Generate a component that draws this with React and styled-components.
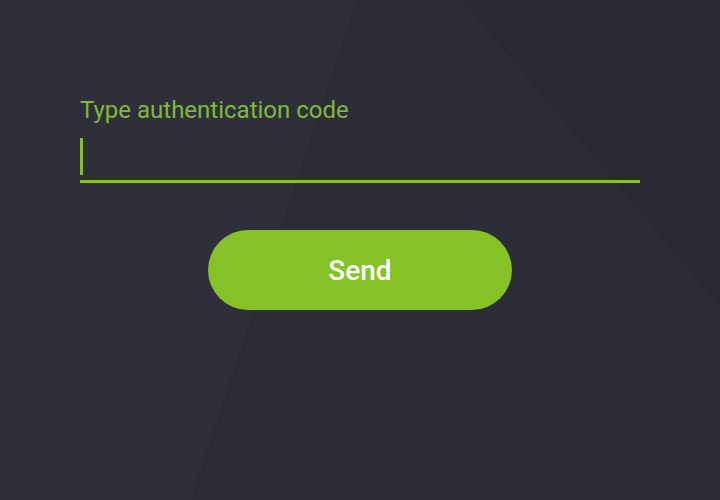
import React from "react";
import styled, { createGlobalStyle } from "styled-components";

const Global = createGlobalStyle`
  html, body { margin: 0; padding: 0; background: #2b2c37; }
  body { font-family: Roboto, "Noto Sans", "Liberation Sans", sans-serif; }
  * { box-sizing: border-box; }
`;

const Page = styled.div`
  position: relative;
  width: 720px;
  height: 500px;
  overflow: hidden;
  background: #2b2c37;
`;

const Backdrop = styled.svg`
  position: absolute;
  inset: 0;
  width: 720px;
  height: 500px;
  z-index: 0;
`;

const Form = styled.form`
  position: relative;
  z-index: 1;
  display: flex;
  flex-direction: column;
  padding: 96px 80px 0 80px;
`;

const Label = styled.label`
  font-size: 24px;
  line-height: 28px;
  color: #7fba38;
  font-weight: 400;
`;

const Field = styled.div`
  margin-top: 14px;
  width: 560px;
  height: 45px;
  border-bottom: 3px solid #84c12e;
  display: flex;
  align-items: flex-start;
`;

const Caret = styled.span`
  display: block;
  width: 3px;
  height: 37px;
  background: #84c12e;
  flex: none;
`;

const CodeInput = styled.input`
  flex: 1;
  height: 37px;
  border: none;
  outline: none;
  background: transparent;
  color: #ffffff;
  font: inherit;
  font-size: 22px;
  padding: 0 4px;
  caret-color: transparent;
`;

const Actions = styled.div`
  display: flex;
  justify-content: center;
  width: 560px;
  margin-top: 47px;
`;

const SendButton = styled.button`
  width: 304px;
  height: 80px;
  border-radius: 40px;
  border: none;
  background: #84c225;
  color: #ffffff;
  font-family: Roboto, "Noto Sans", "Liberation Sans", sans-serif;
  font-size: 28px;
  font-weight: 500;
  cursor: pointer;
`;

export default function App() {
  return (
    <>
      <Global />
      <Page>
        <Backdrop viewBox="0 0 720 500" aria-hidden="true">
          <polygon points="0,0 358,0 192,500 0,500" fill="#2e2f3b" />
          <polygon points="463,0 720,0 720,305" fill="#282934" />
          <line x1="358" y1="0" x2="192" y2="500" stroke="#25262f" strokeWidth="1" opacity="0.6" />
          <line x1="463" y1="0" x2="720" y2="305" stroke="#25262f" strokeWidth="1" opacity="0.6" />
        </Backdrop>
        <Form onSubmit={(e) => e.preventDefault()}>
          <Label htmlFor="code">Type authentication code</Label>
          <Field>
            <Caret />
            <CodeInput id="code" type="text" />
          </Field>
          <Actions>
            <SendButton type="submit">Send</SendButton>
          </Actions>
        </Form>
      </Page>
    </>
  );
}
